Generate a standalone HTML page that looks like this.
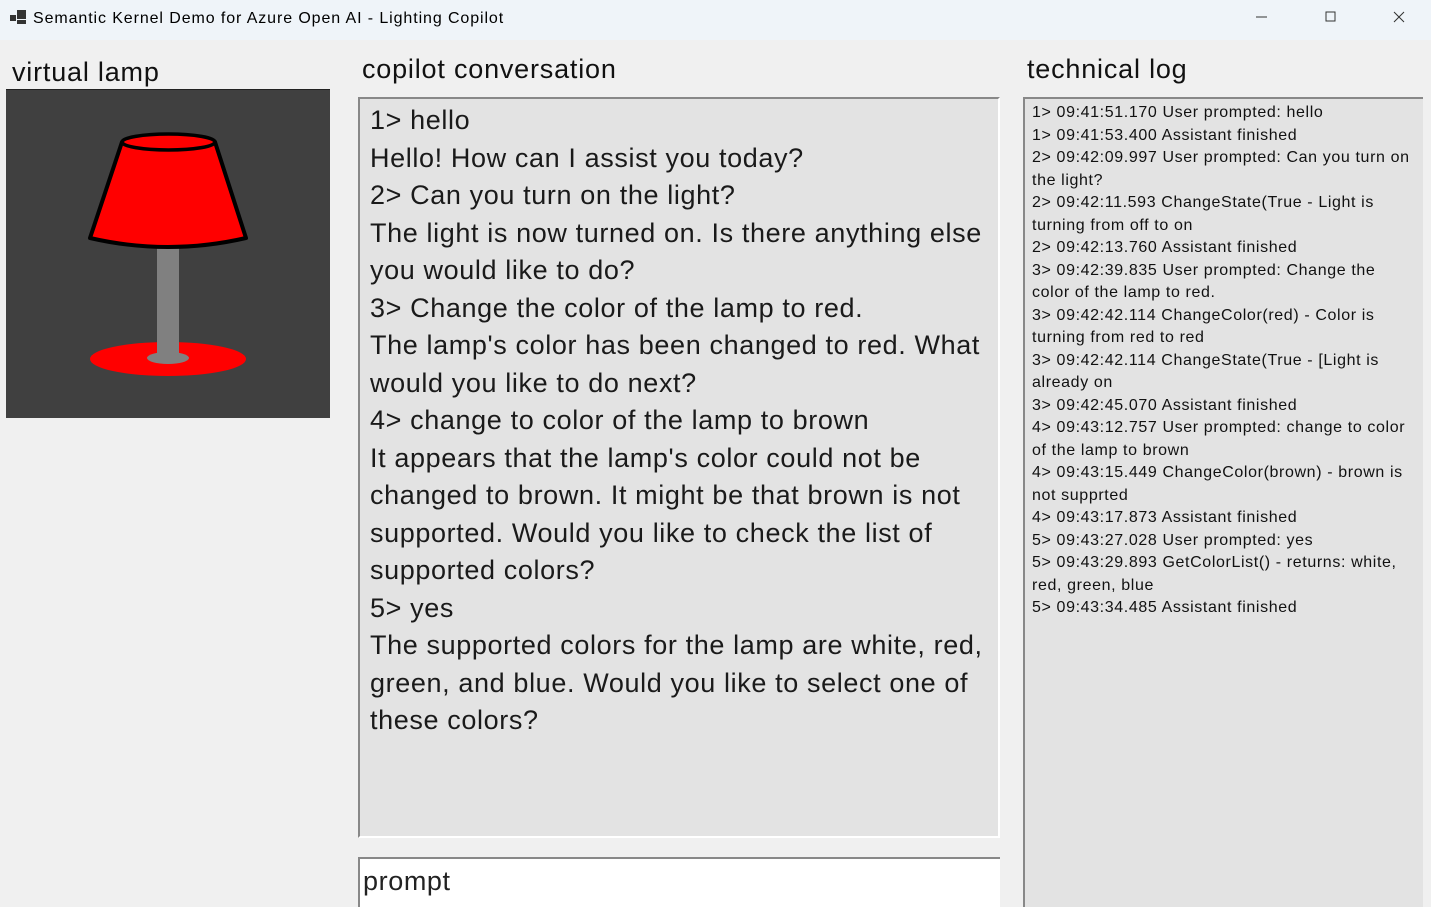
<!DOCTYPE html>
<html><head><meta charset="utf-8"><style>
*{margin:0;padding:0;box-sizing:border-box}
body{width:1431px;height:903px;overflow:hidden;background:#f0f0f0;font-family:"Liberation Sans",sans-serif;position:relative;color:#000}
.title{position:absolute;left:0;top:0;width:1431px;height:40px;background:#eff4f9;font-size:16px}
.title .t{position:absolute;left:33px;top:10px;letter-spacing:0.9px}
.lbl{position:absolute;font-size:27px;color:#111;letter-spacing:0.8px}
.conv{position:absolute;left:358px;top:97px;width:642px;height:741px;background:#e3e3e3;border-top:2px solid #888;border-left:2px solid #888;border-right:2px solid #fff;border-bottom:2px solid #fff;padding:3px 0 0 10px;font-size:27px;line-height:37.5px;color:#1a1a1a;letter-spacing:0.62px}
.conv div,.log div{white-space:nowrap}
.log{position:absolute;left:1023px;top:97px;width:400px;height:810px;background:#e3e3e3;border-top:2px solid #888;border-left:2px solid #888;padding:3px 0 0 7px;font-size:16px;line-height:22.5px;color:#111;letter-spacing:0.62px}
.prompt{position:absolute;left:358px;top:857px;width:642px;height:50px;background:#fff;border-top:2px solid #888;border-left:2px solid #888;padding:7px 0 0 3px;font-size:27px;color:#222;letter-spacing:0.6px}
</style></head><body>
<div class="title">
<svg style="position:absolute;left:10px;top:9px" width="18" height="16"><rect x="0" y="6" width="6" height="6" fill="#333"/><rect x="7" y="1" width="9" height="9" fill="#333"/><rect x="7" y="11" width="9" height="4" fill="#333"/></svg>
<span class="t">Semantic Kernel Demo for Azure Open AI - Lighting Copilot</span>
<svg style="position:absolute;left:1250px;top:10px" width="160" height="16"><line x1="6" y1="7" x2="17" y2="7" stroke="#333"/><rect x="76" y="2" width="9" height="9" fill="none" stroke="#333"/><path d="M144 2 L154 12 M154 2 L144 12" stroke="#333"/></svg>
</div>
<div class="lbl" style="left:12px;top:57px">virtual lamp</div>
<div class="lbl" style="left:362px;top:54px">copilot conversation</div>
<div class="lbl" style="left:1027px;top:54px">technical log</div>
<svg style="position:absolute;left:6px;top:89px" width="324" height="329" viewBox="6 89 324 329">
<rect x="6" y="89" width="324" height="329" fill="#404040"/>
<rect x="6" y="89" width="324" height="1" fill="#222"/>
<ellipse cx="168" cy="359" rx="78" ry="17" fill="#f00"/>
<rect x="157" y="248" width="22" height="110" fill="#808080"/>
<ellipse cx="168" cy="358" rx="21" ry="6" fill="#808080"/>
<path d="M122 142 L90 238 Q168 256 246 238 L215 142 Z" fill="#f00" stroke="#000" stroke-width="4" stroke-linejoin="round"/>
<ellipse cx="168.5" cy="142" rx="46.5" ry="8" fill="#f00" stroke="#000" stroke-width="3.5"/>
</svg>
<div class="conv">
<div>1&gt; hello</div>
<div>Hello! How can I assist you today?</div>
<div>2&gt; Can you turn on the light?</div>
<div>The light is now turned on. Is there anything else</div>
<div>you would like to do?</div>
<div>3&gt; Change the color of the lamp to red.</div>
<div>The lamp's color has been changed to red. What</div>
<div>would you like to do next?</div>
<div>4&gt; change to color of the lamp to brown</div>
<div>It appears that the lamp's color could not be</div>
<div>changed to brown. It might be that brown is not</div>
<div>supported. Would you like to check the list of</div>
<div>supported colors?</div>
<div>5&gt; yes</div>
<div>The supported colors for the lamp are white, red,</div>
<div>green, and blue. Would you like to select one of</div>
<div>these colors?</div>
</div>
<div class="log">
<div>1&gt; 09:41:51.170 User prompted: hello</div>
<div>1&gt; 09:41:53.400 Assistant finished</div>
<div>2&gt; 09:42:09.997 User prompted: Can you turn on</div>
<div>the light?</div>
<div>2&gt; 09:42:11.593 ChangeState(True - Light is</div>
<div>turning from off to on</div>
<div>2&gt; 09:42:13.760 Assistant finished</div>
<div>3&gt; 09:42:39.835 User prompted: Change the</div>
<div>color of the lamp to red.</div>
<div>3&gt; 09:42:42.114 ChangeColor(red) - Color is</div>
<div>turning from red to red</div>
<div>3&gt; 09:42:42.114 ChangeState(True - [Light is</div>
<div>already on</div>
<div>3&gt; 09:42:45.070 Assistant finished</div>
<div>4&gt; 09:43:12.757 User prompted: change to color</div>
<div>of the lamp to brown</div>
<div>4&gt; 09:43:15.449 ChangeColor(brown) - brown is</div>
<div>not supprted</div>
<div>4&gt; 09:43:17.873 Assistant finished</div>
<div>5&gt; 09:43:27.028 User prompted: yes</div>
<div>5&gt; 09:43:29.893 GetColorList() - returns: white,</div>
<div>red, green, blue</div>
<div>5&gt; 09:43:34.485 Assistant finished</div>
</div>
<div class="prompt">prompt</div>
</body></html>
